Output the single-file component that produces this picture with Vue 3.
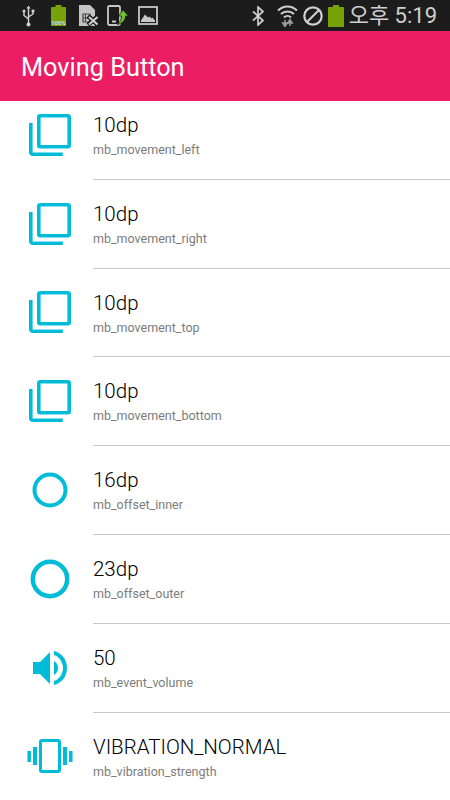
<template>
  <div class="screen">
    <div class="status-bar">
      <div class="status-left">
        <svg class="ic-usb" viewBox="0 0 13 22" fill="none" stroke="#d2d2d2" stroke-width="1.4">
          <path d="M6.5 2v17M6.5 14L2 10.5V7M6.5 12L11 9V6.5" />
          <path d="M6.5 0.5l2 3h-4z" fill="#d2d2d2" stroke="none" />
          <circle cx="2" cy="6" r="1.5" fill="#d2d2d2" stroke="none" />
          <rect x="9.6" y="4.6" width="2.8" height="2.8" fill="#d2d2d2" stroke="none" />
          <circle cx="6.5" cy="19.5" r="2" fill="#d2d2d2" stroke="none" />
        </svg>
        <div class="batt-small">
          <svg viewBox="0 0 15 21">
            <path d="M4.500 0h6v2h3.500a1 1 0 0 1 1 1v18H0V3a1 1 0 0 1 1-1h3.500z" fill="#76a20a" />
          </svg>
          <span class="batt-label">100%</span>
        </div>
        <svg class="ic-sim" viewBox="0 0 20 21">
          <path d="M0 0h11l5 5v16H0z" fill="#c4c4c4" />
          <path d="M4 9h7v8H4z" fill="none" stroke="#444" stroke-width="1.200" />
          <path d="M6.500 9v8M4 13h7" stroke="#444" stroke-width="1" />
          <path d="M9 11l10 9M19 11L9 20" stroke="#1c1c1c" stroke-width="4.500" />
          <path d="M10 12l8.500 7.500M18.500 12L10 19.500" stroke="#d2d2d2" stroke-width="2" />
        </svg>
        <svg class="ic-tablet" viewBox="0 0 21 21">
          <rect x="1" y="1" width="12" height="19" rx="1.500" fill="none" stroke="#c8c8c8" stroke-width="1.800" />
          <rect x="5" y="15.500" width="4" height="2" fill="#c8c8c8" />
          <path d="M16 5l5.500 6h-3c0 4-3 7.500-8.500 8.500 3-2 4.500-5 4.500-8.500h-3z" fill="#6fc32a" stroke="#1c1c1c" stroke-width=".7" />
        </svg>
        <svg class="ic-image" viewBox="0 0 20 19">
          <rect x="1" y="1" width="18" height="17" fill="none" stroke="#c8c8c8" stroke-width="1.800" />
          <path d="M3 14.500l4-6 3 3 1.500-1 2 2 1-1 2.500 3V16H3z" fill="#c8c8c8" />
        </svg>
      </div>
      <div class="status-right">
        <svg class="ic-bt" viewBox="0 0 12 20" fill="none" stroke="#cfcfcf" stroke-width="1.700">
          <path d="M1 5.500l10 9L6 19V1l5 4.500-10 9" />
        </svg>
        <svg class="ic-wifi" viewBox="0 0 21 23" fill="none" stroke="#cfcfcf" stroke-width="2">
          <path d="M1 6.500c5.500-5.500 13.500-5.500 19 0M4 10c3.500-3.500 9.500-3.500 13 0M7 13.500c2-2 5-2 7 0" />
          <path d="M8 16v6M5.700 19l2.300 3.500 2.300-3.500z" stroke="#9a9a9a" stroke-width="1.500" fill="#9a9a9a" />
          <path d="M13 22v-6M10.700 19l2.300-3.500 2.300 3.500z" stroke="#9a9a9a" stroke-width="1.500" fill="#9a9a9a" />
        </svg>
        <svg class="ic-block" viewBox="0 0 20 20" fill="none" stroke="#cfcfcf" stroke-width="2.200">
          <circle cx="10" cy="10" r="8.700" />
          <path d="M4 16L16 4" />
        </svg>
        <svg class="ic-batt" viewBox="0 0 16 22">
          <path d="M5 0h6v2h4a1 1 0 0 1 1 1v19H0V3a1 1 0 0 1 1-1h4z" fill="#76a20a" />
        </svg>
        <span class="clock">오후 5:19</span>
      </div>
    </div>

    <div class="toolbar">Moving Button</div>

    <div class="list-wrap">
      <div class="list">
        <div v-for="item in items" :key="item.name" class="row">
          <div class="row-icon">
            <svg v-if="item.icon === 'copy'" class="icon-copy" viewBox="0 0 42 42" fill="none" stroke="#00bcd9" stroke-width="3.600">
              <rect x="9.800" y="1.800" width="30.400" height="31" rx="1.500" />
              <path d="M1.800 9v29a2 2 0 0 0 2 2.200h30" />
            </svg>
            <svg v-else-if="item.icon === 'small-circle'" class="icon-small" viewBox="0 0 36 36" fill="none" stroke="#00bcd9" stroke-width="4">
              <circle cx="18" cy="18" r="15.500" />
            </svg>
            <svg v-else-if="item.icon === 'big-circle'" class="icon-big" viewBox="0 0 40 40" fill="none" stroke="#00bcd9" stroke-width="4.500">
              <circle cx="20" cy="20" r="17.200" />
            </svg>
            <svg v-else-if="item.icon === 'volume'" class="icon-volume" viewBox="0 0 34 34" fill="#00bcd9">
              <path d="M0 11h7L17 1v32L7 23H0z" />
              <path d="M21 0c7 1.500 13 8 13 17s-6 15.500-13 17v-4c5-1.500 9-7 9-13s-4-11.500-9-13z" />
              <path d="M21 10c2.500 1.500 4 4 4 7s-1.500 5.500-4 7z" />
            </svg>
            <svg v-else class="icon-vibrate" viewBox="0 0 46 34" fill="none" stroke="#00bcd9">
              <rect x="13.500" y="1.500" width="19" height="31" rx="1.500" stroke-width="3" />
              <path d="M8 8v18M38 8v18" stroke-width="4" />
              <path d="M2.200 12v11M43.800 12v11" stroke-width="3.500" />
            </svg>
          </div>
          <div class="row-body">
            <div class="row-value">{{ item.value }}</div>
            <div class="row-name">{{ item.name }}</div>
          </div>
        </div>
      </div>
    </div>
  </div>
</template>

<script setup>
const items = [
  { icon: 'copy', value: '10dp', name: 'mb_movement_left' },
  { icon: 'copy', value: '10dp', name: 'mb_movement_right' },
  { icon: 'copy', value: '10dp', name: 'mb_movement_top' },
  { icon: 'copy', value: '10dp', name: 'mb_movement_bottom' },
  { icon: 'small-circle', value: '16dp', name: 'mb_offset_inner' },
  { icon: 'big-circle', value: '23dp', name: 'mb_offset_outer' },
  { icon: 'volume', value: '50', name: 'mb_event_volume' },
  { icon: 'vibrate', value: 'VIBRATION_NORMAL', name: 'mb_vibration_strength' }
]
</script>

<style>
html, body { margin: 0; background: #fff; overflow: hidden; }
</style>

<style scoped>
.screen {
  width: 450px;
  height: 800px;
  display: flex;
  flex-direction: column;
  overflow: hidden;
  font-family: Roboto, sans-serif;
  background: #fff;
}

.status-bar {
  height: 31px;
  flex: none;
  background: #1c1c1c;
  display: flex;
  align-items: center;
  justify-content: space-between;
  padding: 0 13px 0 22px;
}
.status-left, .status-right { display: flex; align-items: center; }

.ic-usb { width: 13px; height: 22px; margin-right: 16px; }
.batt-small { position: relative; width: 15px; height: 21px; margin-right: 13px; }
.batt-small svg { width: 15px; height: 21px; display: block; }
.batt-label {
  position: absolute;
  left: -2px;
  right: -2px;
  bottom: 0;
  text-align: center;
  font-size: 6px;
  font-weight: 700;
  line-height: 7px;
  color: #d8d8d8;
}
.ic-sim { width: 20px; height: 21px; margin-right: 8px; }
.ic-tablet { width: 21px; height: 21px; margin-right: 10px; }
.ic-image { width: 20px; height: 19px; }

.ic-bt { width: 12px; height: 20px; margin-right: 13px; }
.ic-wifi { width: 21px; height: 23px; margin-right: 5px; }
.ic-block { width: 20px; height: 20px; margin-right: 5px; }
.ic-batt { width: 16px; height: 22px; margin-right: 5px; }
.clock {
  font-family: Roboto, "Noto Sans CJK KR", sans-serif;
  font-size: 22px;
  line-height: 31px;
  color: #cfcfcf;
  white-space: nowrap;
}

.toolbar {
  height: 70px;
  flex: none;
  position: relative;
  z-index: 1;
  display: flex;
  align-items: center;
  padding: 2px 0 0 21px;
  box-sizing: border-box;
  background: #ec1e63;
  color: #fff;
  font-size: 25.300px;
}

.list-wrap { flex: 1; overflow: hidden; }
.list { margin-top: -10px; }

.row {
  height: 88.800px;
  box-sizing: border-box;
  display: flex;
}
.row-icon {
  width: 93px;
  flex: none;
  display: flex;
  align-items: center;
  justify-content: center;
  padding-bottom: 1px;
  box-sizing: border-box;
}
.row-icon svg { display: block; position: relative; left: 3.500px; }
.icon-copy { width: 42px; height: 42px; }
.icon-small { width: 36px; height: 36px; }
.icon-big { width: 40px; height: 40px; }
.icon-volume { width: 34px; height: 34px; }
.icon-vibrate { width: 46px; height: 34px; }

.row-body {
  flex: 1;
  border-bottom: 1px solid #c8c8c8;
  padding-top: 21px;
}
.row-value {
  font-size: 20.500px;
  font-weight: 300;
  line-height: 26px;
  color: #000;
}
.row-name {
  margin-top: 3px;
  font-size: 12.500px;
  line-height: 18px;
  color: #7c7c7c;
}
</style>
